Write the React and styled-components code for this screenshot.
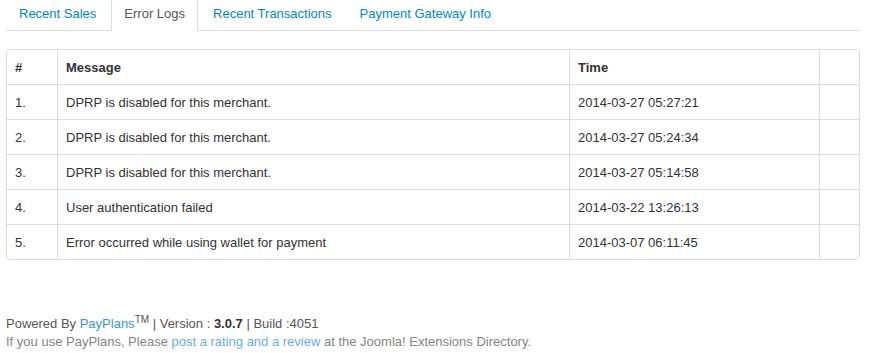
import React from 'react';
import styled, { createGlobalStyle } from 'styled-components';

const GlobalStyle = createGlobalStyle`
  html, body {
    margin: 0;
    padding: 0;
    background: #fff;
  }
  body {
    font-family: "Liberation Sans", Arial, Helvetica, sans-serif;
    font-size: 13px;
    line-height: 18px;
    color: #333;
    overflow: hidden;
  }
`;

const Page = styled.div`
  width: 854px;
  padding: 0 6px;
  margin-top: -5px;
`;

const Tabs = styled.ul`
  display: flex;
  list-style: none;
  margin: 0 0 18px;
  padding: 0;
  border-bottom: 1px solid #ddd;
`;

const Tab = styled.li`
  margin-right: 2px;
  margin-bottom: -1px;
  padding: 9px 12px 7px;
  line-height: 18px;
  border: 1px solid ${p => (p.$active ? '#ddd' : 'transparent')};
  border-bottom-color: ${p => (p.$active ? '#fff' : 'transparent')};
  border-radius: 4px 4px 0 0;
  background: ${p => (p.$active ? '#fff' : 'transparent')};
  color: ${p => (p.$active ? '#555' : '#0088cc')};
  cursor: ${p => (p.$active ? 'default' : 'pointer')};
`;

const Table = styled.table`
  width: 854px;
  border-collapse: separate;
  border-spacing: 0;
  border: 1px solid #ddd;
  border-radius: 4px;
  table-layout: fixed;
`;

const Th = styled.th`
  text-align: left;
  font-weight: bold;
  padding: 9px 8px 7px;
  height: 18px;
  line-height: 18px;
  border-left: ${p => (p.$first ? 'none' : '1px solid #ddd')};
  width: ${p => p.$w}px;
`;

const Td = styled.td`
  padding: 9px 8px 7px;
  height: 18px;
  line-height: 18px;
  border-top: 1px solid #ddd;
  border-left: ${p => (p.$first ? 'none' : '1px solid #ddd')};
`;

const Footer = styled.div`
  margin-top: 55px;
  line-height: 18px;
`;

const Line = styled.div`
  color: ${p => (p.$dim ? '#858585' : '#555')};
`;

const Link = styled.a`
  color: ${p => (p.$dim ? '#6aaedc' : '#3a96d6')};
  text-decoration: none;
`;

const Sup = styled.sup`
  font-size: 10px;
  line-height: 0;
`;

const Strong = styled.b`
  color: #333;
`;

const rows = [
  ['1.', 'DPRP is disabled for this merchant.', '2014-03-27 05:27:21'],
  ['2.', 'DPRP is disabled for this merchant.', '2014-03-27 05:24:34'],
  ['3.', 'DPRP is disabled for this merchant.', '2014-03-27 05:14:58'],
  ['4.', 'User authentication failed', '2014-03-22 13:26:13'],
  ['5.', 'Error occurred while using wallet for payment', '2014-03-07 06:11:45'],
];

export default function App() {
  return (
    <Page>
      <GlobalStyle />
      <Tabs>
        <Tab>Recent Sales</Tab>
        <Tab $active>Error Logs</Tab>
        <Tab>Recent Transactions</Tab>
        <Tab>Payment Gateway Info</Tab>
      </Tabs>
      <Table>
        <thead>
          <tr>
            <Th $first $w={34}>#</Th>
            <Th $w={495}>Message</Th>
            <Th $w={233}>Time</Th>
            <Th $w={23}></Th>
          </tr>
        </thead>
        <tbody>
          {rows.map(r => (
            <tr key={r[0]}>
              <Td $first>{r[0]}</Td>
              <Td>{r[1]}</Td>
              <Td>{r[2]}</Td>
              <Td></Td>
            </tr>
          ))}
        </tbody>
      </Table>
      <Footer>
        <Line>
          Powered By <Link href="#">PayPlans</Link>
          <Sup>TM</Sup> | Version : <Strong>3.0.7</Strong> | Build :4051
        </Line>
        <Line $dim>
          If you use PayPlans, Please <Link $dim href="#">post a rating and a review</Link> at the Joomla! Extensions Directory.
        </Line>
      </Footer>
    </Page>
  );
}
